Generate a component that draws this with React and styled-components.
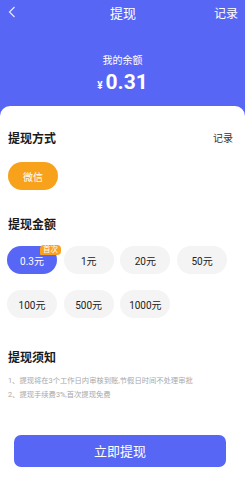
import React from 'react'
import styled, { createGlobalStyle } from 'styled-components'

const BLUE = '#5866f6'
const ORANGE = '#f8a21c'

const GlobalStyle = createGlobalStyle`
  html, body {
    margin: 0;
    padding: 0;
    background: #fff;
    font-family: Roboto, "Noto Sans CJK SC", sans-serif;
  }
`

const Page = styled.div`
  width: 245px;
  height: 484px;
  background: ${BLUE};
  display: flex;
  flex-direction: column;
  overflow: hidden;
`

const Header = styled.div`
  height: 106px;
  display: flex;
  flex-direction: column;
  color: #fff;
`

const TopBar = styled.div`
  height: 24px;
  display: grid;
  grid-template-columns: 1fr auto 1fr;
  align-items: center;
  padding: 0 7px 0 8px;
`

const BackButton = styled.div`
  display: flex;
  align-items: center;
`

const Title = styled.div`
  font-size: 13px;
`

const HeadLink = styled.div`
  font-size: 12px;
  justify-self: end;
`

const Balance = styled.div`
  display: flex;
  flex-direction: column;
  align-items: center;
  margin-top: 31px;
`

const BalanceLabel = styled.div`
  font-size: 10px;
  line-height: 12px;
`

const BalanceValue = styled.div`
  display: flex;
  align-items: baseline;
  margin-top: 3px;
  font-size: 21px;
  font-weight: 700;
  line-height: 24px;
`

const Yen = styled.span`
  font-size: 10px;
  margin-right: 3px;
  font-weight: 700;
`

const Card = styled.div`
  flex: 1;
  background: #fff;
  border-radius: 10px 10px 0 0;
  padding: 23px 7px 0 8px;
  display: flex;
  flex-direction: column;
`

const SectionHead = styled.div`
  display: flex;
  align-items: center;
  justify-content: space-between;
  height: 16px;
  margin-top: ${p => p.$top || 0}px;
`

const SectionTitle = styled.div`
  font-size: 12px;
  font-weight: 700;
  color: #1a1a1a;
`

const SmallLink = styled.div`
  font-size: 10px;
  color: #333;
  margin-right: 5px;
`

const MethodPill = styled.div`
  width: 50px;
  height: 28px;
  border-radius: 14px;
  background: ${ORANGE};
  color: #fff;
  font-size: 10px;
  display: flex;
  align-items: center;
  justify-content: center;
  margin-top: 17px;
`

const AmountGrid = styled.div`
  display: grid;
  grid-template-columns: repeat(4, 50px);
  column-gap: 6.7px;
  row-gap: 16px;
  margin-top: 15px;
  margin-left: -1px;
`

const AmountPill = styled.div`
  position: relative;
  height: 28px;
  border-radius: 14px;
  background: ${p => (p.$active ? BLUE : '#f4f4f4')};
  color: ${p => (p.$active ? '#fff' : '#222')};
  font-size: 10px;
  display: flex;
  align-items: center;
  justify-content: center;
`

const Badge = styled.div`
  position: absolute;
  top: -1px;
  right: -4px;
  width: 21px;
  height: 10px;
  border-radius: 4px 4px 4px 1px;
  background: ${ORANGE};
  color: #fff;
  font-size: 7.5px;
  line-height: 10px;
  text-align: center;
`

const Notes = styled.div`
  margin-top: 12px;
  display: flex;
  flex-direction: column;
  gap: 4px;
`

const Note = styled.div`
  font-size: 7.3px;
  line-height: 10px;
  color: #a8a8a8;
`

const SubmitButton = styled.button`
  margin: 35px 12px 0 6px;
  height: 32px;
  border: 0 none;
  border-radius: 7px;
  background: ${BLUE};
  color: #fff;
  font: 13px/1 Roboto, "Noto Sans CJK SC", sans-serif;
  cursor: pointer;
`

const amounts = ['0.3元', '1元', '20元', '50元', '100元', '500元', '1000元']

const App = () => {
  return (
    <Page>
      <GlobalStyle />
      <Header>
        <TopBar>
          <BackButton>
            <svg width="8" height="12" viewBox="0 0 8 12">
              <path d="M6.5 1 L1.5 6 L6.5 11" fill="none" stroke="#e6e8ff" strokeWidth="1.2" />
            </svg>
          </BackButton>
          <Title>提现</Title>
          <HeadLink>记录</HeadLink>
        </TopBar>
        <Balance>
          <BalanceLabel>我的余额</BalanceLabel>
          <BalanceValue>
            <Yen>¥</Yen>0.31
          </BalanceValue>
        </Balance>
      </Header>
      <Card>
        <SectionHead>
          <SectionTitle>提现方式</SectionTitle>
          <SmallLink>记录</SmallLink>
        </SectionHead>
        <MethodPill>微信</MethodPill>
        <SectionHead $top={25}>
          <SectionTitle>提现金额</SectionTitle>
        </SectionHead>
        <AmountGrid>
          {amounts.map((a, i) => (
            <AmountPill key={a} $active={i === 0}>
              {a}
              {i === 0 && <Badge>首次</Badge>}
            </AmountPill>
          ))}
        </AmountGrid>
        <SectionHead $top={30}>
          <SectionTitle>提现须知</SectionTitle>
        </SectionHead>
        <Notes>
          <Note>1、提现将在3个工作日内审核到账,节假日时间不处理审批</Note>
          <Note>2、提现手续费3%,首次提现免费</Note>
        </Notes>
        <SubmitButton>立即提现</SubmitButton>
      </Card>
    </Page>
  )
}

export default App
